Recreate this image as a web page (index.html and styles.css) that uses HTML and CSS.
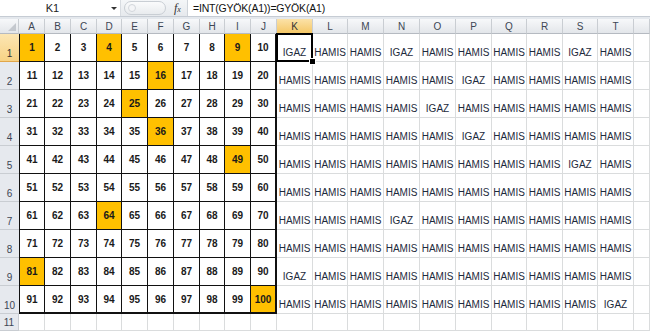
FILE: index.html
```html
<!DOCTYPE html>
<html lang="hu">
<head>
    <meta charset="UTF-8">
    <meta name="viewport" content="width=device-width, initial-scale=1.0">
    <title>Négyzetszámok</title>
    <link rel="stylesheet" href="styles.css">
</head>
<body>
    <div class="formula-bar">
        <div class="name-box">
            <span class="name">K1</span>
            <span class="drop"></span>
        </div>
        <div class="fx-area">
            <span class="pill"><span class="knob"></span></span>
            <span class="fx">f<span class="fx-sub">x</span></span>
        </div>
        <div class="formula">=INT(GYÖK(A1))=GYÖK(A1)</div>
    </div>
    <div class="bar-gap"></div>
    <div class="sheet" id="sheet"></div>

    <script src="script.js"></script>
</body>
</html>
```

FILE: styles.css
```css
body {
    margin: 0;
    font-family: "Liberation Sans", Arial, sans-serif;
    font-size: 10px;
    color: #1c2533;
    background: #ffffff;
    overflow: hidden;
    height: 100vh;
}

/* formula bar */
.formula-bar {
    display: flex;
    height: 16px;
    border-bottom: 1px solid #c6ccd4;
    background: #ffffff;
}

.name-box {
    width: 120px;
    display: flex;
    align-items: center;
}

.name {
    flex: 1;
    text-align: center;
    font-size: 11px;
    color: #222;
    padding-right: 6px;
}

.drop {
    width: 0;
    height: 0;
    border-left: 3px solid transparent;
    border-right: 3px solid transparent;
    border-top: 3px solid #333;
    margin-right: 3px;
}

.fx-area {
    width: 66px;
    display: flex;
    align-items: center;
    background: linear-gradient(to bottom, #f4f6f8, #e6e9ed);
    border-left: 1px solid #d8dce1;
}

.pill {
    width: 40px;
    height: 12px;
    margin-left: 3px;
    border: 1px solid #c9ced4;
    border-radius: 7px;
    background: linear-gradient(to bottom, #fafbfc, #e8ebee);
    display: flex;
    align-items: center;
}

.knob {
    width: 6px;
    height: 6px;
    margin-left: 3px;
    border-radius: 50%;
    border: 1px solid #d2d6db;
    background: #f4f5f7;
}

.fx {
    margin-left: 8px;
    font-family: "Liberation Serif", "Times New Roman", serif;
    font-style: italic;
    font-size: 12px;
    color: #333;
}

.fx-sub {
    font-size: 8px;
}

.formula {
    flex: 1;
    border-left: 1px solid #cfd4da;
    padding-left: 5px;
    font-size: 10.5px;
    letter-spacing: -0.2px;
    line-height: 16px;
    color: #111;
}

.bar-gap {
    height: 2px;
    background: #e4e8ed;
}

/* sheet grid */
.sheet {
    display: grid;
    grid-template-columns: 19px 26px 26px 26px 25px 26px 26px 26px 25px 26px 26px 36px 35px 36px 36px 36px 36px 35px 36px 35px 36px 1fr;
    grid-template-rows: 15px repeat(10, 28px) 17px;
}

.sheet > div {
    box-sizing: border-box;
    white-space: nowrap;
}

.hdr {
    background: linear-gradient(to bottom, #f7f8fa, #e3e6ea);
    color: #3d4654;
    border-right: 1px solid #c9cdd2;
    border-bottom: 1px solid #b5bac1;
    display: flex;
    justify-content: center;
    align-items: center;
}

.hdr.corner {
    position: relative;
}

.corner svg {
    position: absolute;
    right: 2px;
    bottom: 2px;
}

.hdr.row {
    align-items: flex-end;
    padding-bottom: 2px;
    background: #e6e9ee;
    border-bottom: 1px solid #c9cdd2;
}

.hdr.on {
    background: linear-gradient(to bottom, #fbe2a8, #f4c766);
    border-bottom-color: #e1a64a;
    color: #333;
}

.hdr.row.on {
    background: linear-gradient(to bottom, #fce6b3, #f7d285);
    border-right: 1px solid #e1a64a;
}

.hdr.row.boxed {
    border-right: none;
}

.num {
    display: flex;
    justify-content: center;
    align-items: center;
    font-weight: bold;
    color: #1a1a1a;
    background: #ffffff;
    border-right: 1px solid #111;
    border-bottom: 1px solid #111;
}

.num.first {
    border-left: 1px solid #111;
}

.num.last {
    border-right: 2px solid #111;
}

.num.bottom {
    border-bottom: 2px solid #111;
}

.num.sq {
    background: #ffc000;
}

.res {
    display: flex;
    justify-content: center;
    align-items: flex-end;
    padding-bottom: 3px;
    color: #1d2a3c;
    border-right: 1px solid #dadcdd;
    border-bottom: 1px solid #dadcdd;
}

.res.active {
    position: relative;
}

.res.active::after {
    content: "";
    position: absolute;
    left: -1px;
    top: -1px;
    right: -1px;
    bottom: -1px;
    border: 2px solid #000;
}

.handle {
    position: absolute;
    right: -4px;
    bottom: -4px;
    width: 5px;
    height: 5px;
    background: #000;
    border: 1px solid #fff;
    z-index: 2;
}
```

FILE: script.js
```javascript
const sheet = document.getElementById('sheet');
const letters = 'ABCDEFGHIJKLMNOPQRST'.split('');

const isSquare = (n) => Number.isInteger(Math.sqrt(n));

const addCell = (className, text) => {
    const cell = document.createElement('div');
    cell.className = className;
    if (text !== undefined) cell.textContent = text;
    sheet.appendChild(cell);
    return cell;
};

// header row
const corner = addCell('hdr corner');
corner.innerHTML = '<svg width="8" height="8" viewBox="0 0 8 8"><polygon points="8,0 8,8 0,8" fill="#c4c8ce"/></svg>';
letters.forEach((letter) => {
    addCell(letter === 'K' ? 'hdr on' : 'hdr', letter);
});
addCell('hdr', ''); // column U, cut off at the window edge

for (let r = 1; r <= 11; r++) {
    let rowClass = 'hdr row';
    if (r === 1) rowClass += ' on';
    if (r <= 10) rowClass += ' boxed';
    addCell(rowClass, r);

    for (let c = 0; c < 10; c++) {
        if (r === 11) {
            addCell('res');
            continue;
        }
        const n = (r - 1) * 10 + c + 1;
        let cls = 'num';
        if (c === 0) cls += ' first';
        if (c === 9) cls += ' last';
        if (r === 10) cls += ' bottom';
        if (isSquare(n)) cls += ' sq';
        addCell(cls, n);
    }

    for (let c = 0; c < 10; c++) {
        if (r === 11) {
            addCell('res');
            continue;
        }
        const n = (r - 1) * 10 + c + 1;
        const cell = addCell('res', isSquare(n) ? 'IGAZ' : 'HAMIS');
        if (r === 1 && c === 0) {
            cell.classList.add('active');
            const handle = document.createElement('span');
            handle.className = 'handle';
            cell.appendChild(handle);
        }
    }

    addCell('res');
}
```
